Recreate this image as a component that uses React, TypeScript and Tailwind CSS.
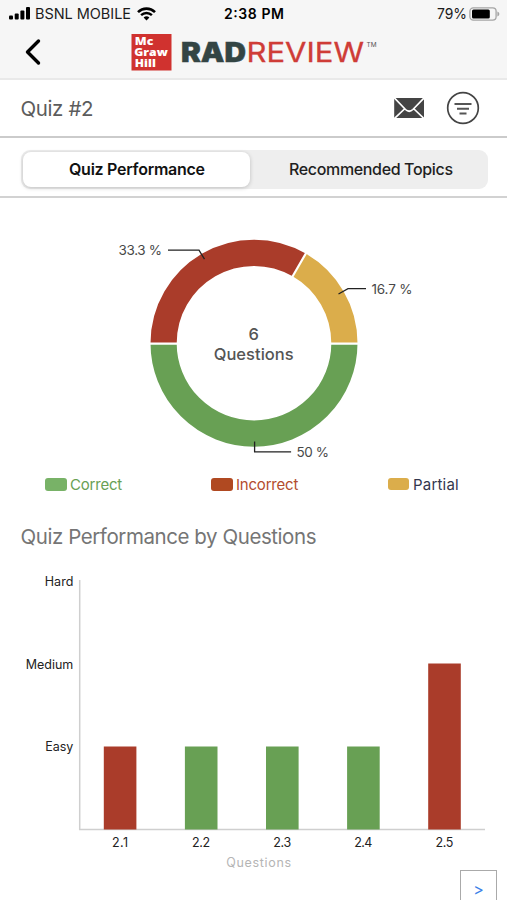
interface Question {
  id: string;
  level: number;
  correct: boolean;
}

const questions: Question[] = [
  { id: '2.1', level: 1, correct: false },
  { id: '2.2', level: 1, correct: true },
  { id: '2.3', level: 1, correct: true },
  { id: '2.4', level: 1, correct: true },
  { id: '2.5', level: 2, correct: false },
];

const levels = ['Easy', 'Medium', 'Hard'];

function StatusBar() {
  return (
    <div className="flex h-7 items-center pr-[7px] pl-[9px]">
      <div className="flex w-[214px] items-center">
        <svg width="22" height="14" viewBox="0 0 22 14" className="shrink-0">
          <rect x="0" y="8.5" width="4" height="4" rx="1" />
          <rect x="5.7" y="6.5" width="4" height="6" rx="1" />
          <rect x="11.4" y="3.5" width="4" height="9" rx="1" />
          <rect x="17" y="0" width="4" height="12.5" rx="1" />
        </svg>
        <svg width="98" height="20" viewBox="0 0 98 20" className="ml-1 shrink-0">
          <text x="0" y="15" fontSize="14.5" textLength="96" fill="#1c1c1c">BSNL MOBILE</text>
        </svg>
        <svg width="19" height="14" viewBox="0 0 19 14" className="ml-[4px] shrink-0">
          <path d="M1 5.1a12.2 12.2 0 0 1 17 0" fill="none" stroke="#000" strokeWidth="2.6" />
          <path d="M4.1 8.2a7.8 7.8 0 0 1 10.8 0" fill="none" stroke="#000" strokeWidth="2.4" />
          <path d="M6.6 10.6a4.2 4.2 0 0 1 5.8 0L9.5 13.5z" />
        </svg>
      </div>
      <svg width="62" height="20" viewBox="0 0 62 20">
        <text x="1" y="15" fontSize="14" fontWeight="600" textLength="60">2:38 PM</text>
      </svg>
      <div className="flex flex-1 items-center justify-end">
        <svg width="32" height="20" viewBox="0 0 32 20">
          <text x="1" y="15" fontSize="14.5" textLength="30" lengthAdjust="spacingAndGlyphs" fill="#1c1c1c">79%</text>
        </svg>
        <svg width="31" height="14" viewBox="0 0 31 14" className="ml-[1px]">
          <rect x="0.9" y="0.9" width="26.2" height="12.2" rx="3.4" fill="none" stroke="#a5a5a5" strokeWidth="1.3" />
          <rect x="3" y="2.6" width="17.8" height="8.8" rx="1.5" />
          <path d="M28.4 4.6q2 .8 2 2.4t-2 2.4z" fill="#a5a5a5" />
        </svg>
      </div>
    </div>
  );
}

function Logo() {
  return (
    <svg width="248" height="40" viewBox="130 32 248 40">
      <rect x="131.5" y="34" width="40" height="36.500" fill="#d0322f" />
      <g fill="#fff" fontFamily="Open Sans, sans-serif" fontWeight="800" fontSize="11.200">
        <text x="134.800" y="45.300" textLength="18.500" lengthAdjust="spacingAndGlyphs">Mc</text>
        <text x="134.300" y="56" textLength="33.500" lengthAdjust="spacingAndGlyphs">Graw</text>
        <text x="134.800" y="67.200" textLength="21" lengthAdjust="spacingAndGlyphs">Hill</text>
      </g>
      <text x="181" y="62" fontSize="27" fontWeight="900" fill="#334544" stroke="#334544" strokeWidth="0.5" textLength="65" lengthAdjust="spacingAndGlyphs">RAD</text>
      <text x="246.500" y="62" fontSize="27" fontWeight="400" fill="#cf3c37" stroke="#cf3c37" strokeWidth="0.300" textLength="117.500" lengthAdjust="spacingAndGlyphs">REVIEW</text>
      <text x="366.500" y="46.500" fontSize="6" fill="#555" textLength="10" lengthAdjust="spacingAndGlyphs">TM</text>
    </svg>
  );
}

function Header() {
  return (
    <header className="h-[80px] border-b-2 border-[#e9e9e9] bg-[#f6f6f6]">
      <StatusBar />
      <div className="flex items-center pt-1">
        <svg width="18" height="28" viewBox="0 0 18 28" className="ml-[24px]">
          <path d="M14.5 3 3.500 14l11 11" fill="none" stroke="#000" strokeWidth="3.400" strokeLinecap="round" strokeLinejoin="round" />
        </svg>
        <div className="ml-[88px]">
          <Logo />
        </div>
      </div>
    </header>
  );
}

function TitleRow() {
  return (
    <div className="flex h-[58px] items-center border-b-2 border-[#cbcbcb] pr-[27px] pl-[20px]">
      <h1 className="flex-1">
        <svg width="76" height="28" viewBox="0 0 76 28">
          <text x="0.500" y="22" fontSize="20.500" fill="#5c5c5c" textLength="73">Quiz #2</text>
        </svg>
      </h1>
      <svg width="31" height="22" viewBox="0 0 31 22">
        <rect x="0.200" y="1" width="29.800" height="20" fill="#444" />
        <path d="M0 .5 11.500 12.500q3.700 3.500 7.400 0L30.500 .5M.5 21.500l10.500-10M30 21.500 19.500 11.500" fill="none" stroke="#fff" strokeWidth="1.700" />
      </svg>
      <svg width="34" height="34" viewBox="0 0 34 34" className="ml-[21px]">
        <circle cx="17" cy="17" r="15.300" fill="none" stroke="#444" strokeWidth="1.700" />
        <path d="M8.500 13h17M11 17.800h12M13.500 22.600h7" fill="none" stroke="#555" strokeWidth="2" />
      </svg>
    </div>
  );
}

function Tabs() {
  return (
    <div className="flex h-[60px] items-center border-b-2 border-[#d2d2d2] pt-[4px] pr-[19px] pl-[21px]">
      <div className="flex h-[39px] w-full rounded-[9px] bg-[#eee] p-[2px]">
        <button className="flex w-[227px] items-center justify-center rounded-[8px] bg-white shadow-[0_1px_4px_rgba(0,0,0,0.2)]">
          <svg width="138" height="24" viewBox="0 0 138 24">
            <text x="69" y="17.500" textAnchor="middle" fontSize="16" fontWeight="600" fill="#111" textLength="136">Quiz Performance</text>
          </svg>
        </button>
        <button className="flex flex-1 items-center justify-center pl-[5px]">
          <svg width="166" height="24" viewBox="0 0 166 24">
            <text x="83" y="17.500" textAnchor="middle" fontSize="16" fontWeight="500" fill="#1f1f1f" textLength="164">Recommended Topics</text>
          </svg>
        </button>
      </div>
    </div>
  );
}

function DonutChart() {
  return (
    <svg width="507" height="270" viewBox="0 198 507 270" className="block">
      <g fill="none" strokeWidth="26.200">
        <path d="M163.600 343.200A90.400 90.400 0 0 1 299.200 264.900" stroke="#aa3c2a" />
        <path d="M299.200 264.900A90.400 90.400 0 0 1 344.400 343.200" stroke="#dbad4b" />
        <path d="M344.400 343.200A90.400 90.400 0 0 1 163.600 343.200" stroke="#68a054" />
      </g>
      {/* Gaps between slices */}
      <path d="M149 343.600h30M329 343.600h30M291.500 278.300l14.600-25.300" stroke="#fff" strokeWidth="2.200" />
      <path d="M168 250.200h31l5.500 9M366 288.700h-18l-9.500 5.300M254.600 441.500v10.400h36.500" fill="none" stroke="#222" strokeWidth="1.300" />
      <g fontSize="13.500" fill="#484848">
        <text x="118.500" y="255.200" textLength="43.500">33.3 %</text>
        <text x="371.500" y="293.800" textLength="41">16.7 %</text>
        <text x="296.500" y="457.200" textLength="32.500">50 %</text>
      </g>
      <g fontSize="16.500" fontWeight="500" fill="#555" textAnchor="middle">
        <text x="253.700" y="340">6</text>
        <text x="253.700" y="360.300" textLength="80">Questions</text>
      </g>
    </svg>
  );
}

function Legend() {
  return (
    <div className="flex h-8 items-center pl-[45px] text-[15px] leading-none">
      <div className="flex w-[166px] items-center gap-[3px] text-[#68a054]">
        <span className="h-[13px] w-[22px] rounded-[3px] bg-[#78b267]" />
        <span className="tracking-[-0.2px]">Correct</span>
      </div>
      <div className="flex w-[177px] items-center gap-[3px] text-[#b34c2e]">
        <span className="h-[13px] w-[22px] rounded-[3px] bg-[#b04921]" />
        <span className="tracking-[-0.2px]">Incorrect</span>
      </div>
      <div className="flex items-center gap-1 text-[#33364d]">
        <span className="h-3 w-[21px] rounded-[3px] bg-[#dbad4b]" />
        <span className="tracking-[0.2px]">Partial</span>
      </div>
    </div>
  );
}

function BarChart() {
  return (
    <svg width="507" height="314" viewBox="0 560 507 314" className="block">
      <g fontSize="12.500" fill="#222" textAnchor="end">
        {levels.map((level, i) => (
          <text key={level} x="73.300" y={751 - i * 82.5}>{level}</text>
        ))}
      </g>
      <path d="M79.700 580v249.500H485" fill="none" stroke="#cfcfcf" strokeWidth="1.500" />
      {questions.map((q, i) => (
        <g key={q.id}>
          <rect
            x={103.8 + i * 81.1}
            y={829.5 - q.level * 83}
            width="32.600"
            height={q.level * 83}
            fill={q.correct ? '#68a054' : '#aa3c2a'}
          />
          <text x={120 + i * 81.1} y="846.500" fontSize="12.500" fill="#222" textAnchor="middle" textLength={i === 0 ? 16 : 18}>{q.id}</text>
        </g>
      ))}
      <text x="258.700" y="866.500" fontSize="12.500" fill="#b5b5b5" textAnchor="middle" textLength="65">Questions</text>
    </svg>
  );
}

export default function App() {
  return (
    <div className="flex h-[900px] w-[507px] flex-col overflow-hidden bg-white font-['Inter','Liberation_Sans',sans-serif]">
      <Header />
      <TitleRow />
      <Tabs />
      <main className="relative h-[702px] shrink-0">
        <DonutChart />
        <Legend />
        <h2 className="mt-[22px] flex h-[30px] items-center pl-[20px]">
          <svg width="300" height="30" viewBox="0 0 300 30">
            <text x="0.500" y="22" fontSize="20.500" fill="#757575" textLength="296">Quiz Performance by Questions</text>
          </svg>
        </h2>
        <div className="mt-[8px]">
          <BarChart />
        </div>
        <button className="absolute right-[10px] bottom-[-8px] h-[38px] w-[37px] border border-[#aaa] bg-white text-[16px] text-[#3d7fe8]">
          &gt;
        </button>
      </main>
    </div>
  );
}
